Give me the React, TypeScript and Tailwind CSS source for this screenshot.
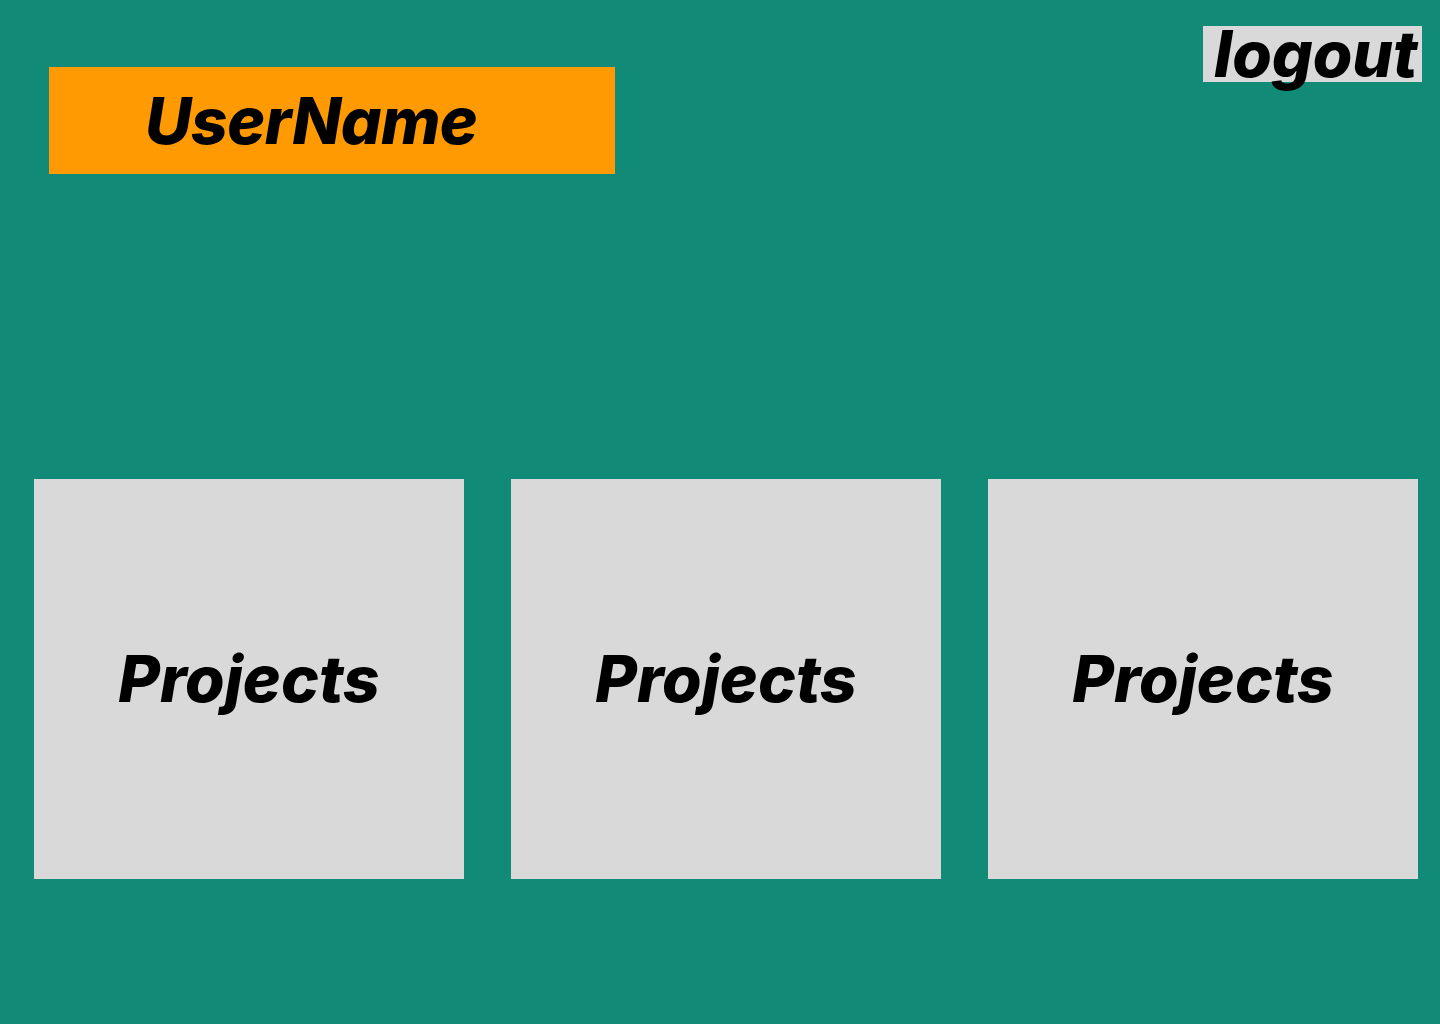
export default function App() {
  const projects = ["Projects", "Projects", "Projects"];

  return (
    <div className="min-h-screen w-full bg-[#118a77] font-['Inter','Liberation_Sans',sans-serif] text-black">
      {/* header */}
      <div className="flex items-start justify-between">
        <div className="ml-[49px] mt-[67px] flex h-[107px] w-[566px] items-center bg-[#ff9a03] pl-[96px]">
          <span className="text-[64px] leading-none font-extrabold italic tracking-[-0.5px]">UserName</span>
        </div>
        <button className="mr-[18px] mt-[26px] h-[56px] w-[219px] bg-[#d9d9d9] pl-[11px] text-left text-[64px] leading-[56px] font-extrabold italic">
          logout
        </button>
      </div>

      {/* project cards */}
      <div className="mt-[305px] flex gap-[47px] pl-[34px]">
        {projects.map((p, i) => (
          <div key={i} className="flex h-[400px] w-[430px] items-center justify-center bg-[#d9d9d9]">
            <span className="text-[64px] leading-none font-extrabold italic">{p}</span>
          </div>
        ))}
      </div>
    </div>
  );
}
